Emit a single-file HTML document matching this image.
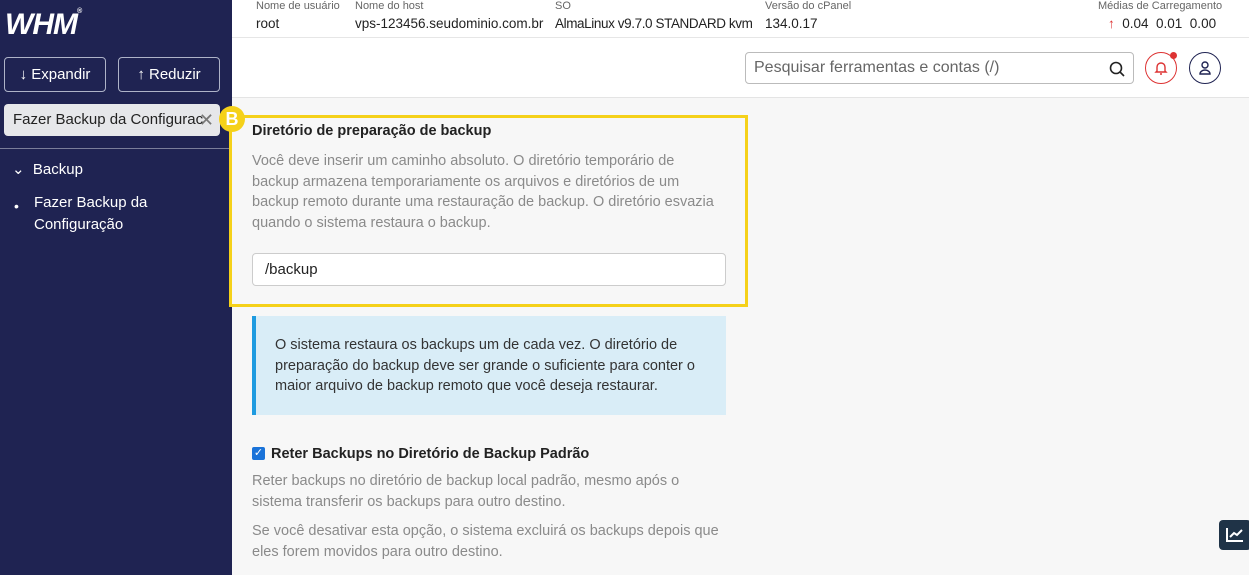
<!DOCTYPE html>
<html><head><meta charset="utf-8"><style>
*{box-sizing:border-box;margin:0;padding:0}
body{width:1249px;height:575px;overflow:hidden;font-family:"Liberation Sans",sans-serif;background:#f7f7f7;position:relative;color:#222}
.side{position:absolute;left:0;top:0;width:232px;height:575px;background:#1f2352;color:#fff}
.abs{position:absolute}
.btn{position:absolute;top:57px;height:35px;border:1px solid #aeb3c8;border-radius:4px;color:#fff;font-size:15px;line-height:33px;text-align:center}
.top{position:absolute;left:232px;top:0;right:0;height:98px;background:#fff;border-bottom:1px solid #e4e4e4}
.lbl{position:absolute;top:0;font-size:11px;color:#666}
.val{position:absolute;top:16px;font-size:13.5px;color:#222}
.gray{color:#8a8a8a;font-size:14.5px;line-height:20.5px}
</style></head><body>
<div class="side">
 <div class="abs" style="left:5px;top:8px;font-size:30px;font-weight:bold;font-style:italic;letter-spacing:-1px;color:#fff">WHM<span style="font-size:7px;vertical-align:top">®</span></div>
 <div class="btn" style="left:4px;width:102px">↓ Expandir</div>
 <div class="btn" style="left:118px;width:102px">↑ Reduzir</div>
 <div class="abs" style="left:4px;top:104px;width:216px;height:32px;background:#e6e7ea;border-radius:4px;color:#222;font-size:15px;line-height:32px;padding-left:9px;white-space:nowrap;overflow:hidden">Fazer Backup da Configurac<span class="abs" style="right:6px;top:0;color:#777;font-size:18px">✕</span></div>
 <div class="abs" style="left:0;top:148px;width:232px;height:1px;background:#7a7e9a"></div>
 <div class="abs" style="left:12px;top:160px;font-size:15px">⌄&nbsp;&nbsp;Backup</div>
 <div class="abs" style="left:14px;top:198px;font-size:14px">•</div>
 <div class="abs" style="left:34px;top:192px;font-size:15px;line-height:22px">Fazer Backup da<br>Configuração</div>
</div>
<div class="top">
 <div class="lbl" style="left:24px">Nome de usuário</div><div class="val" style="left:24px">root</div>
 <div class="lbl" style="left:123px">Nome do host</div><div class="val" style="left:123px">vps-123456.seudominio.com.br</div>
 <div class="lbl" style="left:323px">SO</div><div class="val" style="left:323px;letter-spacing:-0.4px">AlmaLinux v9.7.0 STANDARD kvm</div>
 <div class="lbl" style="left:533px">Versão do cPanel</div><div class="val" style="left:533px">134.0.17</div>
 <div class="lbl" style="left:866px">Médias de Carregamento</div>
 <div class="val" style="left:876px"><span style="color:#d33">↑</span>&nbsp;&nbsp;0.04&nbsp;&nbsp;0.01&nbsp;&nbsp;0.00</div>
 <div class="abs" style="left:0;right:0;top:37px;height:1px;background:#e6e6e6"></div>
 <div class="abs" style="left:513px;top:52px;width:389px;height:32px;border:1px solid #bbb;border-radius:4px;font-size:16px;color:#666;line-height:30px;padding-left:8px">Pesquisar ferramentas e contas (/)
  <svg class="abs" style="right:8px;top:8px" width="16" height="16" viewBox="0 0 16 16"><circle cx="7" cy="7" r="5.5" fill="none" stroke="#222" stroke-width="1.6"/><path d="M11 11l4 4" stroke="#222" stroke-width="1.6"/></svg></div>
 <div class="abs" style="left:913px;top:52px;width:32px;height:32px;border:1.5px solid #d33;border-radius:50%"><svg class="abs" style="left:8px;top:7px" width="14" height="16" viewBox="0 0 14 16"><path d="M3 11V7a4 4 0 0 1 8 0v4l1 1H2zM6 14h2" fill="none" stroke="#d33" stroke-width="1.4"/></svg><div class="abs" style="left:24px;top:-1px;width:7px;height:7px;border-radius:50%;background:#d33"></div></div>
 <div class="abs" style="left:957px;top:52px;width:32px;height:32px;border:1.5px solid #1f2352;border-radius:50%"><svg class="abs" style="left:8px;top:7px" width="14" height="16" viewBox="0 0 14 16"><circle cx="7" cy="5" r="3" fill="none" stroke="#1f2352" stroke-width="1.4"/><path d="M2 14a5 4 0 0 1 10 0z" fill="none" stroke="#1f2352" stroke-width="1.4"/></svg></div>
</div>
<div class="abs" style="left:229px;top:115px;width:519px;height:192px;border:3px solid #f5d11a"></div>
<div class="abs" style="left:219px;top:106px;width:26px;height:26px;border-radius:50%;background:#f5d11a;color:#fff;font-weight:bold;font-size:18px;text-align:center;line-height:26px">B</div>
<div class="abs" style="left:252px;top:123px;font-size:14.5px;font-weight:bold;color:#222">Diretório de preparação de backup</div>
<div class="abs gray" style="left:252px;top:151px;width:490px;white-space:nowrap">Você deve inserir um caminho absoluto. O diretório temporário de<br>backup armazena temporariamente os arquivos e diretórios de um<br>backup remoto durante uma restauração de backup. O diretório esvazia<br>quando o sistema restaura o backup.</div>
<div class="abs" style="left:252px;top:253px;width:474px;height:33px;background:#fff;border:1px solid #ccc;border-radius:4px;font-size:15px;line-height:31px;padding-left:12px">/backup</div>
<div class="abs" style="left:252px;top:316px;width:474px;height:99px;background:#d9edf7;border-left:4px solid #1e9be0;padding:19px 0 0 19px;font-size:14.5px;line-height:20.5px;color:#333">O sistema restaura os backups um de cada vez. O diretório de preparação do backup deve ser grande o suficiente para conter o maior arquivo de backup remoto que você deseja restaurar.</div>
<div class="abs" style="left:252px;top:447px;width:13px;height:13px;background:#1a73d9;border-radius:2px;color:#fff;font-size:11px;line-height:13px;text-align:center">✓</div>
<div class="abs" style="left:271px;top:446px;font-size:14.5px;font-weight:bold">Reter Backups no Diretório de Backup Padrão</div>
<div class="abs gray" style="left:252px;top:471px;width:460px">Reter backups no diretório de backup local padrão, mesmo após o sistema transferir os backups para outro destino.</div>
<div class="abs gray" style="left:252px;top:521px;width:480px">Se você desativar esta opção, o sistema excluirá os backups depois que eles forem movidos para outro destino.</div>
<div class="abs" style="left:1219px;top:520px;width:32px;height:30px;background:#1f3347;border-radius:4px"><svg class="abs" style="left:7px;top:7px" width="18" height="16" viewBox="0 0 18 16"><path d="M1 1v13h16M4 10l4-4 3 2 5-5" fill="none" stroke="#fff" stroke-width="2"/></svg></div>
</body></html>
